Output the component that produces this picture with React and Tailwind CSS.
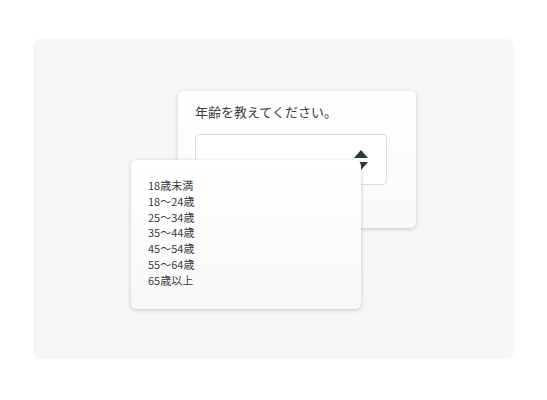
import React from 'react';

const ages = ['18歳未満', '18〜24歳', '25〜34歳', '35〜44歳', '45〜54歳', '55〜64歳', '65歳以上'];

// up/down arrow of the select box
const SortArrows = () => (
  <svg width="14" height="21" viewBox="0 0 14 21" className="block">
    <polygon points="7,0 14,8 0,8" fill="#2a3b37" />
    <polygon points="0,12 14,12 7,20" fill="#2a3b37" />
  </svg>
);

export default function App() {
  return (
    <div
      className="w-[547px] h-[400px] bg-white pt-[39px] pl-[33px]"
      style={{ fontFamily: '"Noto Sans CJK JP", "Noto Sans", sans-serif' }}
    >
      <div className="relative w-[481px] h-[320px] rounded-lg bg-[#f6f6f6]">
        {/* question card */}
        <div className="absolute left-[145px] top-[52px] w-[238px] h-[137px] rounded-md bg-gradient-to-b from-white to-[#f9f9f9] shadow-[0_1px_4px_rgba(0,0,0,0.18)] pt-[11px] px-[17px]">
          <p className="text-[13px] leading-[20px] text-[#3a3a3a]">年齢を教えてください。</p>
          <div className="mt-[12px] w-[192px] h-[51px] rounded border border-[#ddd] bg-white flex items-start justify-end pr-[18px] pt-[15px]">
            <SortArrows />
          </div>
        </div>

        {/* open option list */}
        <div className="absolute left-[98px] top-[121px] w-[230px] h-[149px] rounded-md bg-gradient-to-b from-white to-[#f8f8f8] shadow-[0_1px_4px_rgba(0,0,0,0.2)] pt-[18px] pl-[17px]">
          <ul className="text-[11px] leading-[15.8px] text-[#3a3a3a]">
            {ages.map((a) => (
              <li key={a}>{a}</li>
            ))}
          </ul>
        </div>
      </div>
    </div>
  );
}
